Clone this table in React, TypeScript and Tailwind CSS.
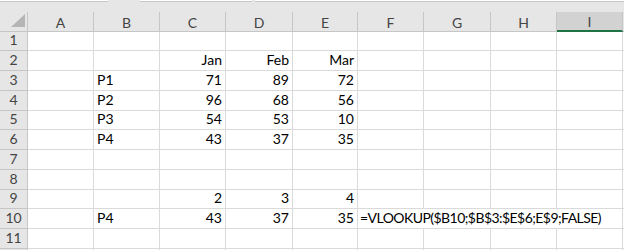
import React from "react";

const COLS = ["A", "B", "C", "D", "E", "F", "G", "H", "I"];
const COL_W = ["w-[66px]", "w-[66px]", "w-[66px]", "w-[67px]", "w-[65px]", "w-[66px]", "w-[67px]", "w-[66px]", "w-[66px]"];
const ROW_H = ["h-[19px]", "h-[20px]", "h-[20px]", "h-[20px]", "h-[19px]", "h-[20px]", "h-[20px]", "h-[20px]", "h-[19px]", "h-[20px]", "h-[20px]", "h-[20px]"];

type Cell = { v: string; align?: "l" | "r" };

const data: Record<number, Record<string, Cell>> = {
  2: { C: { v: "Jan", align: "r" }, D: { v: "Feb", align: "r" }, E: { v: "Mar", align: "r" } },
  3: { B: { v: "P1" }, C: { v: "71", align: "r" }, D: { v: "89", align: "r" }, E: { v: "72", align: "r" } },
  4: { B: { v: "P2" }, C: { v: "96", align: "r" }, D: { v: "68", align: "r" }, E: { v: "56", align: "r" } },
  5: { B: { v: "P3" }, C: { v: "54", align: "r" }, D: { v: "53", align: "r" }, E: { v: "10", align: "r" } },
  6: { B: { v: "P4" }, C: { v: "43", align: "r" }, D: { v: "37", align: "r" }, E: { v: "35", align: "r" } },
  9: { C: { v: "2", align: "r" }, D: { v: "3", align: "r" }, E: { v: "4", align: "r" } },
  10: { B: { v: "P4" }, C: { v: "43", align: "r" }, D: { v: "37", align: "r" }, E: { v: "35", align: "r" } },
};

const font = { fontFamily: "Lato, 'Open Sans', sans-serif" };

export default function App() {
  return (
    <div className="w-[624px] h-[250px] overflow-hidden bg-white text-[14px] leading-none" style={font}>
      {/* formula bar edge */}
      <div className="flex h-[2px] bg-[#e6e6e6]">
        <div className="w-[108px] bg-white border-b border-[#c6c6c6]" />
        <div className="w-[32px]" />
        <div className="w-[112px] bg-white border-b border-[#c6c6c6]" />
        <div className="w-[3px]" />
        <div className="flex-1 bg-white border-b border-[#c6c6c6]" />
      </div>
      <div className="h-[10px] bg-[#e6e6e6]" />
      {/* column headers */}
      <div className="flex h-[20px] bg-[#e6e6e6]">
        <div className="relative w-[28px] border-r border-b border-[#c6c6c6]">
          <svg className="absolute left-[11px] top-[2px]" width="14" height="13" viewBox="0 0 14 13">
            <polygon points="14,0 14,13 0,13" fill="#b5b5b5" />
          </svg>
        </div>
        {COLS.map((c, i) =>
          c === "I" ? (
            <div
              key={c}
              className={`${COL_W[i]} flex items-center justify-center bg-[#d2d2d2] border-r border-[#c6c6c6] border-b-2 border-b-[#217346] text-[#444] pt-[1px]`}
            >
              {c}
            </div>
          ) : (
            <div
              key={c}
              className={`${COL_W[i]} flex items-center justify-center border-r border-b border-[#c6c6c6] text-[#444] pt-[2px]`}
            >
              {c}
            </div>
          )
        )}
        <div className="flex-1 border-b border-[#c6c6c6]" />
      </div>
      {/* rows */}
      {ROW_H.map((h, r) => {
        const row = r + 1;
        const cells = data[row] || {};
        return (
          <div key={row} className={`flex ${h}`}>
            <div className="w-[28px] flex items-end justify-center pb-[3px] bg-[#e6e6e6] border-r border-b border-[#c6c6c6] text-[#444]">
              {row <= 11 ? row : ""}
            </div>
            {row === 10 ? (
              <>
                {COLS.slice(0, 5).map((c, i) => (
                  <DataCell key={c} w={COL_W[i]} cell={cells[c]} />
                ))}
                <div className="w-[265px] flex items-end pl-[2px] pb-[3px] border-r border-b border-[#dadada] whitespace-nowrap text-black tracking-[-0.55px]">
                  =VLOOKUP($B10;$B$3:$E$6;E$9;FALSE)
                </div>
              </>
            ) : (
              COLS.map((c, i) => <DataCell key={c} w={COL_W[i]} cell={cells[c]} />)
            )}
            <div className="flex-1 border-b border-[#dadada]" />
          </div>
        );
      })}
    </div>
  );
}

function DataCell({ w, cell }: { w: string; cell?: Cell }) {
  return (
    <div
      className={`${w} flex items-end pb-[3px] border-r border-b border-[#dadada] text-black ${
        cell?.align === "r" ? "justify-end pr-[3px]" : "justify-start pl-[3px]"
      }`}
    >
      {cell?.v}
    </div>
  );
}
